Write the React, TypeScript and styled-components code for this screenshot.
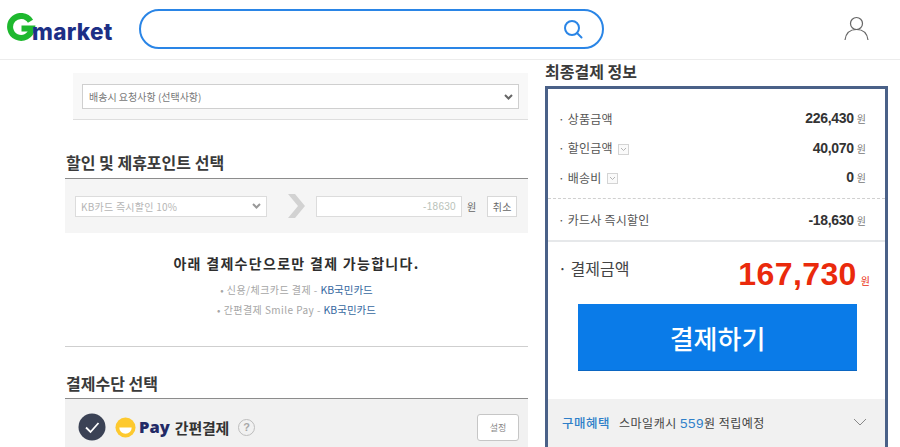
import React from "react";
import styled, { createGlobalStyle } from "styled-components";

const KR = `"Noto Sans CJK KR", "Liberation Sans", sans-serif`;
const NUM = `"Liberation Sans", "Noto Sans CJK KR", sans-serif`;

const Global = createGlobalStyle`
  html, body { margin: 0; padding: 0; background: #fff; }
  body { width: 900px; height: 447px; overflow: hidden; font-family: ${KR}; color: #333; }
  * { box-sizing: border-box; }
`;

const Page = styled.div`width: 900px; height: 447px; overflow: hidden; display: flex; flex-direction: column;`;
const Header = styled.header`
  height: 60px; flex: none; display: flex; align-items: flex-start; border-bottom: 1px solid #ececec;
  padding: 9px 31px 0 6px;
`;
const Logo = styled.div`display: flex; align-items: flex-end; width: 133px; height: 34px; flex: none; padding-top: 4px;`;
const LogoText = styled.span`
  font-family: Inter, sans-serif; font-weight: 800; font-size: 22.5px; line-height: 26px; letter-spacing: 0.3px;
  color: #1c2f86; margin-left: -4px; transform: translateY(2px);
`;
const Search = styled.div`
  width: 465px; height: 40px; border: 2px solid #2a85e6; border-radius: 20px; display: flex; align-items: center;
  justify-content: flex-end; padding-right: 18px; flex: none;
`;
const UserSlot = styled.div`margin-left: auto; padding-top: 7px;`;

const Main = styled.main`flex: 1; display: flex; padding-left: 65px; gap: 17px; min-height: 0;`;
const Left = styled.section`width: 463px; flex: none; padding-top: 13px; display: flex; flex-direction: column;`;
const Right = styled.aside`width: 343px; flex: none; display: flex; flex-direction: column;`;

const RequestBox = styled.div`
  margin-left: 8px; height: 47px; background: #f8f8f8; border-bottom: 1px solid #dedede; padding: 11px 9px 0;
`;
const Select = styled.div<{ $w: string; $h: number; $muted?: boolean }>`
  width: ${p => p.$w}; height: ${p => p.$h}px; flex: none; background: #fff; border: 1px solid ${p => (p.$muted ? "#dcdcdc" : "#cfcfcf")};
  display: flex; align-items: center; justify-content: space-between; padding: 0 5px 0 ${p => (p.$muted ? 5 : 6)}px;
  font-size: 10px; letter-spacing: ${p => (p.$muted ? 0.25 : 0)}px; color: ${p => (p.$muted ? "#b5b5b5" : "#777")};
`;
const Heading = styled.h2`
  margin: 0; font-size: 16px; line-height: 20px; font-weight: 700; color: #3a3a3a; padding-left: 1px;
`;
const DiscountHeading = styled(Heading)`margin-top: 32px; padding-bottom: 6px; border-bottom: 1px solid #8c8c8c;`;
const MethodHeading = styled(Heading)`margin-top: 26px; padding-bottom: 5px; border-bottom: 1px solid #8c8c8c;`;
const DiscountPanel = styled.div`
  height: 54px; background: #f5f5f5; display: flex; align-items: center; padding: 0 10px;
`;
const Arrow = styled.div`margin: 0 9px 0 20px; display: flex; flex: none;`;
const AmountInput = styled.div`
  width: 146px; height: 21px; background: #fff; border: 1px solid #dcdcdc; font-size: 10px; color: #b9c2b9;
  font-family: ${NUM}; display: flex; align-items: center; justify-content: flex-end; padding-right: 5px; flex: none; letter-spacing: 0.3px;
`;
const Won = styled.span`font-size: 10px; color: #666; margin: 0 11px 0 5px;`;
const SmallBtn = styled.div`
  width: 30px; height: 21px; border: 1px solid #d8d8d8; background: #fff; font-size: 10px; color: #666;
  display: flex; align-items: center; justify-content: center; letter-spacing: 0.3px; flex: none;
`;
const Notice = styled.div`
  height: 114px; border-bottom: 1px solid #cfcfcf; display: flex; flex-direction: column; align-items: center; padding-top: 19px;
`;
const NoticeTitle = styled.div`font-size: 14px; line-height: 22px; font-weight: 700; letter-spacing: 1.3px; color: #2e2e2e;`;
const NoticeLine = styled.div`font-size: 10px; line-height: 20px; color: #a6a6a6; letter-spacing: 0.45px;`;
const FirstNoticeLine = styled(NoticeLine)`margin-top: 6px;`;
const CardName = styled.span`color: #36689f; font-size: 10.5px; letter-spacing: 0;`;
const PayPanel = styled.div`
  height: 48px; background: #f1f1f1; display: flex; align-items: center; padding: 8px 9px 0 13px;
`;
const PayMark = styled.div`display: flex; margin-right: 9px; flex: none;`;
const PayWord = styled.span`
  font-family: "Open Sans", sans-serif; font-weight: 800; font-size: 16.5px; line-height: 22px; color: #232a66; margin: 0 5px 0 3px;
`;
const PayLabel = styled.span`font-size: 15px; font-weight: 700; color: #333; letter-spacing: -0.2px;`;
const Help = styled.span`
  width: 17px; height: 17px; border: 1.5px solid #bdbdbd; border-radius: 50%; margin-left: 9px; color: #a8a8a8;
  font: 700 11px/14px ${NUM}; text-align: center; flex: none;
`;
const SettingBtn = styled.div`
  margin-left: auto; width: 42px; height: 27px; background: #fff; border: 1px solid #c6c6c6; border-radius: 3px;
  font-size: 9px; color: #888; display: flex; align-items: center; justify-content: center;
`;

const RightTitle = styled(Heading)`margin: 0; height: 26px; padding: 1px 0 0;`;
const Summary = styled.div`
  flex: 1; border: 3px solid #4a6188; border-bottom: 0; display: flex; flex-direction: column; min-height: 0;
`;
const Rows = styled.div`padding: 14.5px 19px 0 10px; height: 110px; border-bottom: 1px dashed #d0d0d0; display: flex; flex-direction: column;`;
const Row = styled.div`
  height: 29.5px; display: flex; align-items: center; justify-content: space-between;
`;
const CardRow = styled(Row)`height: 43px; padding: 0 19px 0 10px; border-bottom: 2px solid #e6e8ea;`;
const Label = styled.span`display: flex; align-items: center; font-size: 12px; color: #555; letter-spacing: 0.2px;`;
const Toggle = styled.span`
  width: 11px; height: 11px; margin: 3px 0 0 5px; border: 1px solid #d4d4d4; display: flex; align-items: center; justify-content: center; background: #fafafa;
`;
const Value = styled.span`display: flex; align-items: baseline; font-family: ${NUM}; font-weight: 700; font-size: 14px; color: #333; letter-spacing: -0.3px;`;
const Unit = styled.span`font-family: ${KR}; font-weight: 400; font-size: 10px; color: #777; margin-left: 3px; letter-spacing: 0;`;
const TotalRow = styled.div`
  display: flex; justify-content: space-between; padding: 14px 15px 0 10px; height: 62px;
`;
const TotalLabel = styled.span`font-size: 16px; line-height: 24px; color: #444; letter-spacing: 0;`;
const TotalValue = styled.span`display: flex; align-items: baseline; height: 36px; margin-top: 2px; font-family: ${NUM}; font-weight: 700; font-size: 32px; line-height: 32px; color: #ea2a0c; letter-spacing: 0.4px;`;
const TotalUnit = styled.span`font-family: ${KR}; font-weight: 400; font-size: 10px; color: #ea2a0c; margin-left: 4px; letter-spacing: 0;`;
const PayButton = styled.button`
  display: block; margin: 0 0 0 30px; width: 279px; height: 67px; flex: none; border: 0; border-bottom: 1px solid #0b66c2; background: #0a7be8; color: #fff;
  font-family: ${KR}; font-size: 26px; font-weight: 500; padding: 0;
`;
const Benefit = styled.div`
  margin-top: 28px; flex: 1; background: #f1f1f1; display: flex; align-items: center; justify-content: space-between; padding: 0 18px 2px 14px; font-size: 12px; color: #444;
`;
const BenefitText = styled.span`white-space: pre; letter-spacing: 0.5px;`;
const BenefitTag = styled.span`color: #2f7fc9; font-weight: 500; font-size: 12.5px; letter-spacing: 0.5px; margin-right: 9px;`;
const BenefitNum = styled.span`color: #2f7fc9; font-size: 13.5px; font-family: ${NUM};`;

const Chevron = ({ color }: { color: string }) => (
  <svg width="9" height="6" viewBox="0 0 9 6"><path d="M1 1l3.5 3.5L8 1" fill="none" stroke={color} strokeWidth="2" /></svg>
);
const Mini = () => (
  <svg width="7" height="5" viewBox="0 0 7 5"><path d="M1 1l2.5 2.5L6 1" fill="none" stroke="#b4b4b4" strokeWidth="1" /></svg>
);

export default function App() {
  return (
    <Page>
      <Global />
      <Header>
        <Logo>
          <svg width="30" height="30" viewBox="0 0 30 30">
            <path d="M24.500 8.200A11 11 0 1 0 26 15.500H15.500" fill="none" stroke="#1eb82e" strokeWidth="6" />
          </svg>
          <LogoText>market</LogoText>
        </Logo>
        <Search>
          <svg width="22" height="22" viewBox="0 0 22 22" fill="none" stroke="#2a85e6" strokeWidth="2">
            <circle cx="10" cy="10" r="7" />
            <path d="M15 15l4.500 4.500" strokeLinecap="round" />
          </svg>
        </Search>
        <UserSlot>
          <svg width="25" height="25" viewBox="0 0 25 25" fill="none" stroke="#666" strokeWidth="1.2">
            <circle cx="12.500" cy="7.500" r="6" />
            <path d="M1 24c.8-6.500 5-10.500 11.500-10.500S23.200 17.500 24 24" />
          </svg>
        </UserSlot>
      </Header>
      <Main>
        <Left>
          <RequestBox>
            <Select $w="437px" $h={25}>
              배송시 요청사항 (선택사항)
              <Chevron color="#666" />
            </Select>
          </RequestBox>
          <DiscountHeading>할인 및 제휴포인트 선택</DiscountHeading>
          <DiscountPanel>
            <Select $w="192px" $h={21} $muted>
              KB카드 즉시할인 10%
              <Chevron color="#999" />
            </Select>
            <Arrow>
              <svg width="20" height="26" viewBox="0 0 20 26"><path d="M1 1h7l10 12L8 25H1l10-12z" fill="#d2d2d2" /></svg>
            </Arrow>
            <AmountInput>-18630</AmountInput>
            <Won>원</Won>
            <SmallBtn>취소</SmallBtn>
          </DiscountPanel>
          <Notice>
            <NoticeTitle>아래 결제수단으로만 결제 가능합니다.</NoticeTitle>
            <FirstNoticeLine>• 신용/체크카드 결제 - <CardName>KB국민카드</CardName></FirstNoticeLine>
            <NoticeLine>• 간편결제 Smile Pay - <CardName>KB국민카드</CardName></NoticeLine>
          </Notice>
          <MethodHeading>결제수단 선택</MethodHeading>
          <PayPanel>
            <PayMark>
              <svg width="28" height="28" viewBox="0 0 28 28">
                <circle cx="14" cy="14" r="13.500" fill="#3b4255" />
                <path d="M8 14.500l4.500 4.500L20.500 10" fill="none" stroke="#fff" strokeWidth="1.800" />
              </svg>
            </PayMark>
            <svg width="21" height="21" viewBox="0 0 22 22">
              <circle cx="11" cy="11" r="10.500" fill="#fdc92e" />
              <path d="M4.500 11h13a6.500 6.500 0 0 1-13 0z" fill="#fff" />
            </svg>
            <PayWord>Pay</PayWord>
            <PayLabel>간편결제</PayLabel>
            <Help>?</Help>
            <SettingBtn>설정</SettingBtn>
          </PayPanel>
        </Left>
        <Right>
          <RightTitle>최종결제 정보</RightTitle>
          <Summary>
            <Rows>
              <Row>
                <Label>· 상품금액</Label>
                <Value>226,430<Unit>원</Unit></Value>
              </Row>
              <Row>
                <Label>· 할인금액<Toggle><Mini /></Toggle></Label>
                <Value>40,070<Unit>원</Unit></Value>
              </Row>
              <Row>
                <Label>· 배송비<Toggle><Mini /></Toggle></Label>
                <Value>0<Unit>원</Unit></Value>
              </Row>
            </Rows>
            <CardRow>
              <Label>· 카드사 즉시할인</Label>
              <Value>-18,630<Unit>원</Unit></Value>
            </CardRow>
            <TotalRow>
              <TotalLabel>· 결제금액</TotalLabel>
              <TotalValue>167,730<TotalUnit>원</TotalUnit></TotalValue>
            </TotalRow>
            <PayButton>결제하기</PayButton>
            <Benefit>
              <BenefitText>
                <BenefitTag>구매혜택</BenefitTag>스마일캐시 <BenefitNum>559</BenefitNum>원 적립예정
              </BenefitText>
              <svg width="14" height="8" viewBox="0 0 14 8"><path d="M1 1l6 6 6-6" fill="none" stroke="#888" strokeWidth="1" /></svg>
            </Benefit>
          </Summary>
        </Right>
      </Main>
    </Page>
  );
}
